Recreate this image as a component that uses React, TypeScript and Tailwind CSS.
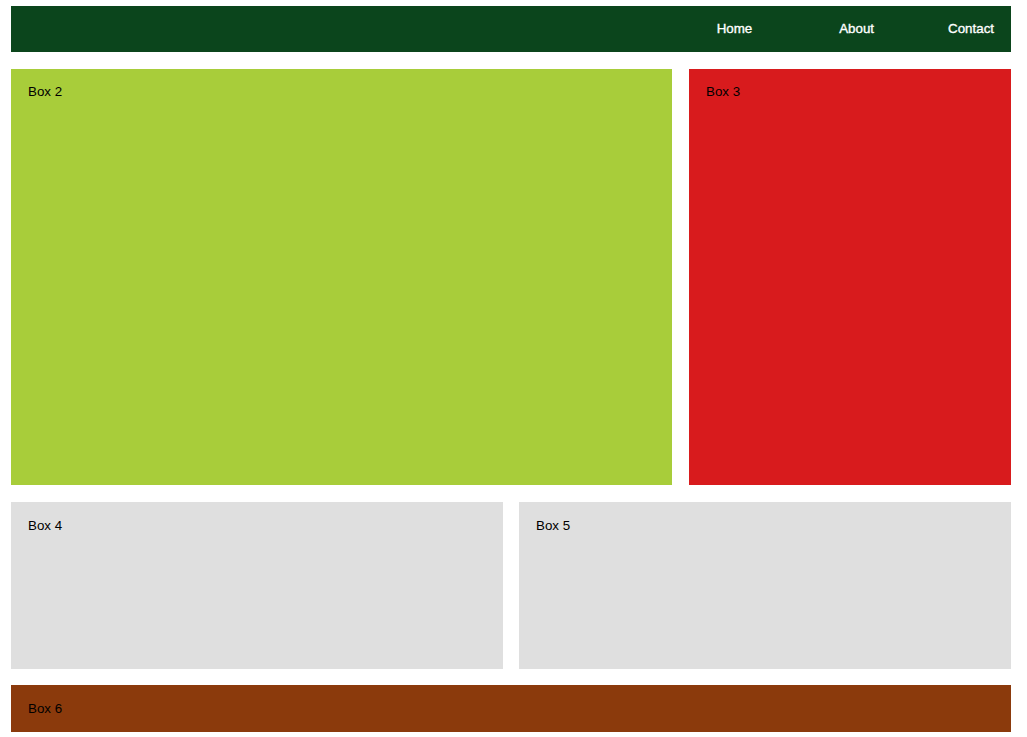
export default function App() {
  const font = { fontFamily: '"Liberation Sans", Arial, sans-serif' };
  return (
    <div className="min-h-[737px] bg-white text-[13.333px] leading-[15px] text-black" style={font}>
      <div className="ml-[11px] w-[1000px] pt-[6px]">
        <header className="flex h-[46px] items-center justify-end bg-[#0b451c] pb-[2px] pr-[17px] text-white [-webkit-text-stroke:0.35px_#ffffff]">
          <a className="block">Home</a>
          <a className="ml-[87px] block">About</a>
          <a className="ml-[74px] block">Contact</a>
        </header>
        <div className="mt-[17px] grid grid-cols-[661px_322px] gap-[17px]">
          <div className="h-[416px] bg-[#a8cd3a] pl-[17px] pr-4 pt-[15px]">Box 2</div>
          <div className="h-[416px] bg-[#d81b1d] pl-[17px] pr-4 pt-[15px]">Box 3</div>
        </div>
        <div className="mt-[17px] grid grid-cols-[492px_492px] gap-[16px]">
          <div className="h-[167px] bg-[#dfdfdf] pl-[17px] pr-4 pt-[16px]">Box 4</div>
          <div className="h-[167px] bg-[#dfdfdf] pl-[17px] pr-4 pt-[16px]">Box 5</div>
        </div>
        <div className="mt-[16px] h-[47px] bg-[#8b3a0c] pl-[17px] pr-4 pt-4">Box 6</div>
      </div>
    </div>
  );
}
